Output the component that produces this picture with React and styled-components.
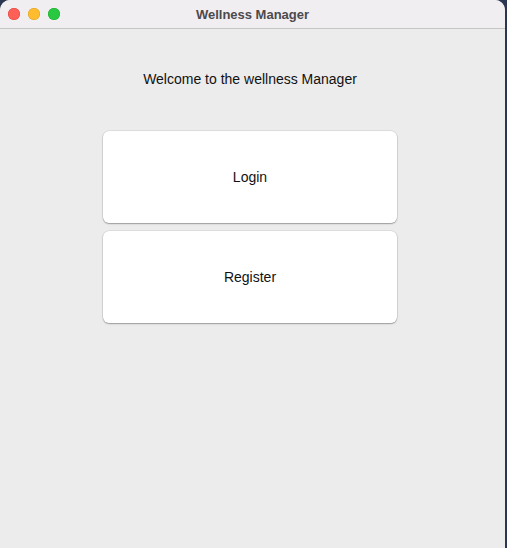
import React from "react";
import styled, { createGlobalStyle } from "styled-components";

const Global = createGlobalStyle`
  html, body { margin: 0; padding: 0; }
  body {
    background: #2b3652;
    width: 507px;
    height: 548px;
    overflow: hidden;
    font-family: "Liberation Sans", Arial, sans-serif;
  }
`;

const Window = styled.div`
  width: 505px;
  height: 548px;
  background: #ececec;
  border-radius: 10px 10px 0 0;
  overflow: hidden;
  display: flex;
  flex-direction: column;
`;

const TitleBar = styled.div`
  height: 28px;
  flex: none;
  background: #f1eef1;
  border-bottom: 1px solid #c6c6c6;
  display: flex;
  align-items: center;
  position: relative;
`;

const Lights = styled.div`
  display: flex;
  gap: 8px;
  padding-left: 8px;
  align-items: center;
  height: 100%;
`;

const Light = styled.span`
  width: 12px;
  height: 12px;
  border-radius: 50%;
  background: ${(p) => p.$c};
  box-shadow: inset 0 0 0 0.5px ${(p) => p.$b};
`;

const Title = styled.div`
  position: absolute;
  left: 0;
  right: 0;
  text-align: center;
  font-size: 13px;
  font-weight: bold;
  color: #4c4a4d;
  pointer-events: none;
`;

const Content = styled.div`
  flex: 1;
  display: flex;
  flex-direction: column;
  align-items: center;
  padding-top: 42px;
  padding-right: 5px;
`;

const Welcome = styled.div`
  font-size: 14px;
  line-height: 16px;
  color: #111;
  margin-bottom: 44px;
`;

const Buttons = styled.div`
  display: flex;
  flex-direction: column;
  gap: 8px;
`;

const Button = styled.button`
  width: 294px;
  height: 92px;
  background: #ffffff;
  border: none;
  border-radius: 6px;
  box-shadow: 0 0 0 0.5px rgba(0, 0, 0, 0.12), 0 1px 1.5px rgba(0, 0, 0, 0.3);
  font-family: "Liberation Sans", Arial, sans-serif;
  font-size: 14px;
  color: #111;
  cursor: pointer;
  padding: 0;
`;

export default function App() {
  return (
    <>
      <Global />
      <Window>
        <TitleBar>
          <Lights>
            <Light $c="#fe5f57" $b="#e0443e" />
            <Light $c="#febc2e" $b="#dea123" />
            <Light $c="#28c840" $b="#1aab29" />
          </Lights>
          <Title>Wellness Manager</Title>
        </TitleBar>
        <Content>
          <Welcome>Welcome to the wellness Manager</Welcome>
          <Buttons>
            <Button>Login</Button>
            <Button>Register</Button>
          </Buttons>
        </Content>
      </Window>
    </>
  );
}
